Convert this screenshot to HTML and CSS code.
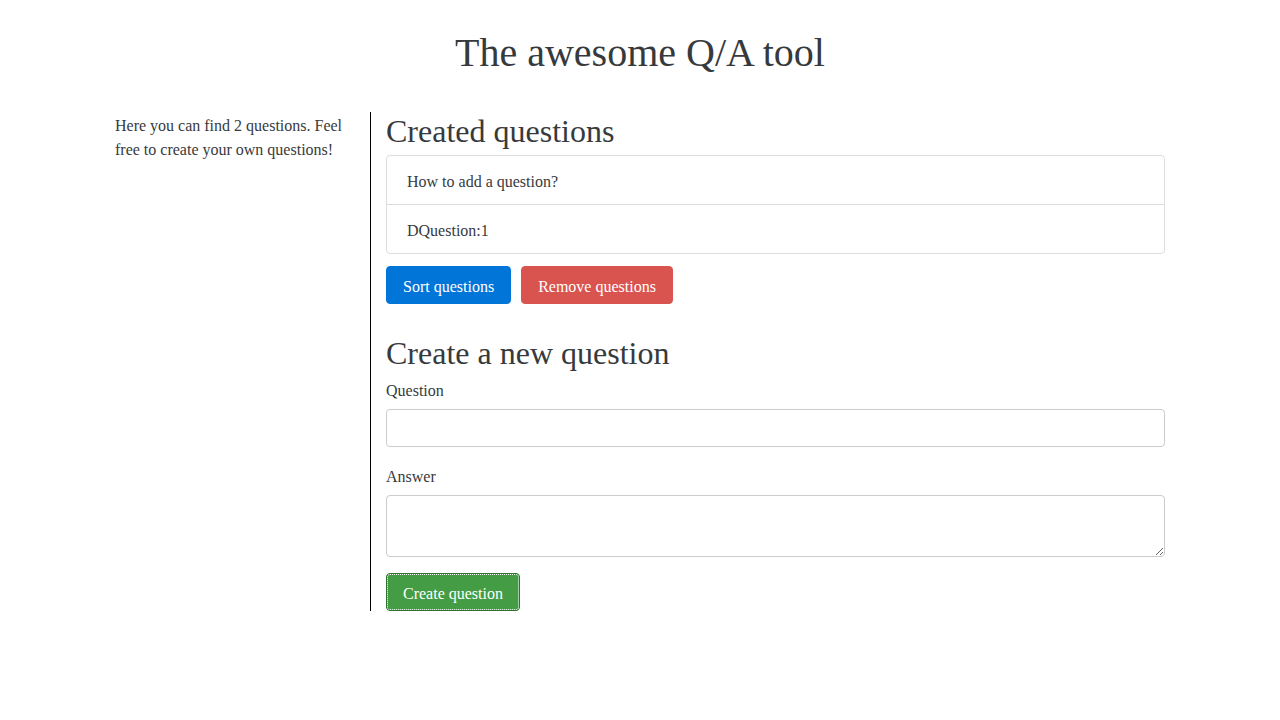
FILE: index.html
```html
<!DOCTYPE html>
<html>
<head>
<meta charset="utf-8">
<link rel="stylesheet" href="styles.css">
</head>
<body>
<div class="container">
  <h1 class="title">The awesome Q/A tool</h1>
  <div class="row">
    <div class="side">
      <p>Here you can find 2 questions. Feel free to create your own questions!</p>
    </div>
    <div class="main">
      <h2>Created questions</h2>
      <ul class="list">
        <li class="item">How to add a question?</li>
        <li class="item">DQuestion:1</li>
      </ul>
      <div class="actions">
        <button class="btn btn-blue">Sort questions</button>
        <button class="btn btn-red">Remove questions</button>
      </div>
      <h2 class="new">Create a new question</h2>
      <form class="form">
        <div class="group">
          <label class="label">Question</label>
          <input class="control" type="text">
        </div>
        <div class="group">
          <label class="label">Answer</label>
          <textarea class="control area" rows="2"></textarea>
        </div>
        <button type="button" class="btn btn-green">Create question</button>
      </form>
    </div>
  </div>
</div>
</body>
</html>
```

FILE: styles.css
```css
html, body {
  margin: 0;
  padding: 0;
  background: #fff;
}
body {
  font-family: "Liberation Serif", "Times New Roman", serif;
  font-size: 16px;
  line-height: 1.5;
  color: #373a3c;
}
.container {
  width: 1080px;
  margin: 0 auto;
  padding: 0 15px;
  box-sizing: border-box;
}
.title {
  margin: 0;
  padding: 31px 0 0;
  height: 112px;
  box-sizing: border-box;
  text-align: center;
  font-size: 40px;
  font-weight: 400;
  line-height: 1.1;
}
.row {
  display: flex;
  margin: 0 -15px;
}
.side {
  width: 270px;
  padding: 2px 15px 0;
  box-sizing: border-box;
}
.side p {
  margin: 0;
}
.main {
  width: 810px;
  padding: 0 15px;
  box-sizing: border-box;
  border-left: 1px solid #000;
}
h2 {
  margin: 0 0 6px;
  padding-top: 2px;
  font-size: 32px;
  font-weight: 400;
  line-height: 1.1;
}
.list {
  list-style: none;
  margin: 0;
  padding: 0;
  border: 1px solid #ddd;
  border-radius: 4px;
}
.item {
  padding: 14px 20px 10px;
  line-height: 24px;
}
.item + .item {
  border-top: 1px solid #ddd;
}
.actions {
  display: flex;
  gap: 10px;
  margin-top: 12px;
}
.btn {
  font-family: inherit;
  font-size: 16px;
  line-height: 24px;
  padding: 8px 16px 4px;
  border: 1px solid transparent;
  border-radius: 4px;
  color: #fff;
  cursor: pointer;
}
.btn-blue {
  background: #0275d8;
  border-color: #0275d8;
}
.btn-red {
  background: #d9534f;
  border-color: #d9534f;
}
.btn-green {
  background: #449d44;
  border-color: #2f752f;
  outline: 1px dotted #fff;
  outline-offset: -2px;
}
.new {
  margin-top: 30px;
}
.form {
  margin: 0;
}
.group {
  margin-bottom: 16px;
}
.label {
  display: block;
  padding-top: 2px;
  margin-bottom: 6px;
}
.control {
  display: block;
  width: 100%;
  box-sizing: border-box;
  padding: 6px 12px;
  font-family: inherit;
  font-size: 16px;
  line-height: 24px;
  height: 38px;
  color: #55595c;
  background: #fff;
  border: 1px solid #ccc;
  border-radius: 4px;
  margin: 0;
}
.area {
  height: 62px;
  resize: vertical;
}
```
